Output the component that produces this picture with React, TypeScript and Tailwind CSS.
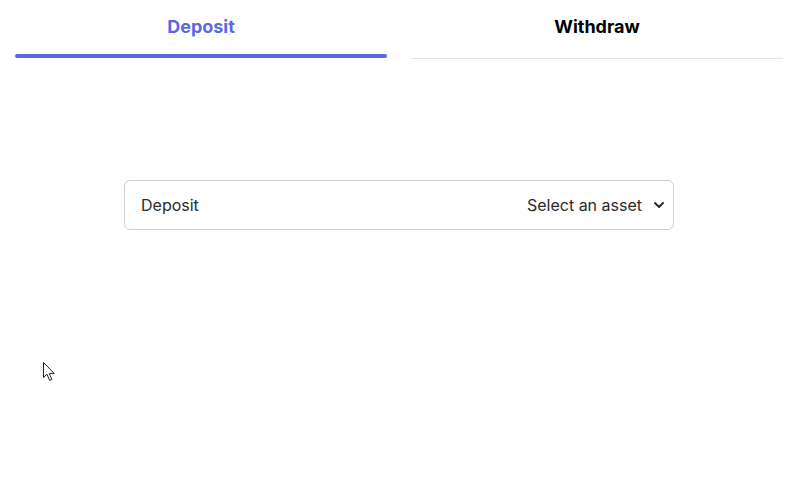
import { ChevronDown } from "lucide-react";
import { useState } from "react";

const TABS = ["Deposit", "Withdraw"];

export default function App() {
  const [tab, setTab] = useState("Deposit");

  return (
    <div className="relative min-h-[483px] w-[798px] bg-white font-['Inter',sans-serif]">
      <div className="flex gap-6 px-[15px]">
        {TABS.map((t) => (
          <button
            key={t}
            onClick={() => setTab(t)}
            className="flex flex-1 flex-col items-center"
          >
            <span
              className={
                "pt-[15px] text-[18px] font-bold leading-[23px] " +
                (tab === t ? "text-[#5a69e0]" : "text-black")
              }
            >
              {t}
            </span>
            {tab === t ? (
              <span className="mt-[16px] mb-px h-1 w-full rounded-full bg-[#5a69e0]" />
            ) : (
              <span className="mt-[20px] h-px w-full bg-[#e3e3ef]" />
            )}
          </button>
        ))}
      </div>

      <div className="mt-[121px] flex justify-center">
        <div className="flex h-[50px] w-[550px] items-center justify-between rounded-md border border-[#cfcfd4] pl-4 pr-[6px] text-base text-[#2b2b2b]">
          <span>{tab}</span>
          <div className="flex items-center gap-[9px]">
            <span>Select an asset</span>
            <ChevronDown className="h-4 w-4 text-[#2b2b2b]" strokeWidth={3} />
          </div>
        </div>
      </div>

      <svg
        className="absolute left-[43px] top-[362px]"
        width="13"
        height="20"
        viewBox="0 0 13 20"
      >
        <path
          d="M0.5 0.5 L0.5 15.5 L4 12.2 L6.6 18.4 L8.8 17.4 L6.3 11.4 L11.2 11.4 Z"
          fill="white"
          stroke="#222"
          strokeWidth="1"
          strokeLinejoin="round"
        />
      </svg>
    </div>
  );
}
